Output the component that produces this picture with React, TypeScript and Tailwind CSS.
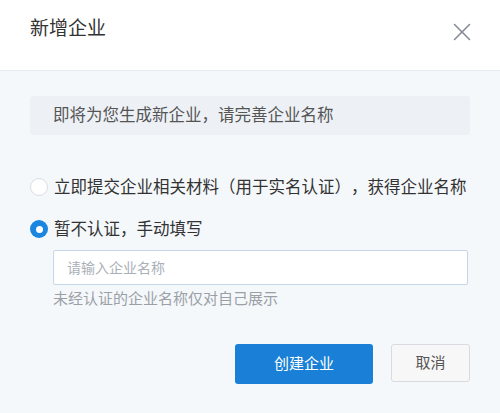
import { X } from "lucide-react"

const font = { fontFamily: '"Liberation Sans", "Noto Sans CJK SC", sans-serif' }

function Radio({ checked }: { checked?: boolean }) {
  if (checked) {
    return (
      <span className="flex h-[18px] w-[18px] shrink-0 items-center justify-center rounded-full bg-[#1a86e0]">
        <span className="h-[7px] w-[7px] rounded-full bg-white" />
      </span>
    )
  }
  return <span className="h-[18px] w-[18px] shrink-0 rounded-full border border-[#d9dde3] bg-white" />
}

export default function App() {
  return (
    <div className="flex h-[413px] w-[500px] flex-col bg-[#f5f8fb] [text-spacing-trim:space-all]" style={font}>
      <div className="flex h-[71px] shrink-0 items-start justify-between border-b border-[#e6eaef] bg-white pl-[30px] pr-[23px]">
        <h1 className="mt-[17px] text-[19px] leading-[24px] text-[#333]">新增企业</h1>
        <X className="mt-[17px] h-[30px] w-[30px] text-[#868b92]" strokeWidth={1.3} />
      </div>

      <div className="flex flex-col px-[30px]">
        <div className="mt-[25px] flex h-[39px] items-center rounded-[3px] bg-[#edf1f6] px-[23px] text-[16.5px] text-[#555]">
          即将为您生成新企业，请完善企业名称
        </div>

        <label className="mt-[40px] flex h-[24px] items-center gap-[6px] text-[16.5px] text-[#333]">
          <Radio />
          <span>立即提交企业相关材料（用于实名认证），获得企业名称</span>
        </label>

        <label className="mt-[18px] flex h-[24px] items-center gap-[6px] text-[16.5px] text-[#333]">
          <Radio checked />
          <span>暂不认证，手动填写</span>
        </label>

        <input
          className="ml-[23px] mt-[9px] h-[35px] w-[415px] rounded-[2px] border border-[#c6d6ea] bg-white px-[13px] text-[14px] text-[#333] outline-none placeholder:text-[#aab0b7]"
          placeholder="请输入企业名称"
        />

        <p className="ml-[23px] mt-[4px] text-[15px] leading-[20px] text-[#9aa0a6]">未经认证的企业名称仅对自己展示</p>

        <div className="mt-[35px] flex justify-end gap-[18px]">
          <button className="h-[40px] w-[138px] rounded-[3px] bg-[#1a7fd6] text-[15px] text-white">创建企业</button>
          <button className="h-[38px] w-[79px] rounded-[3px] border border-[#d8dbdf] bg-[#f7f7f7] text-[15px] text-[#555]">取消</button>
        </div>
      </div>
    </div>
  )
}
